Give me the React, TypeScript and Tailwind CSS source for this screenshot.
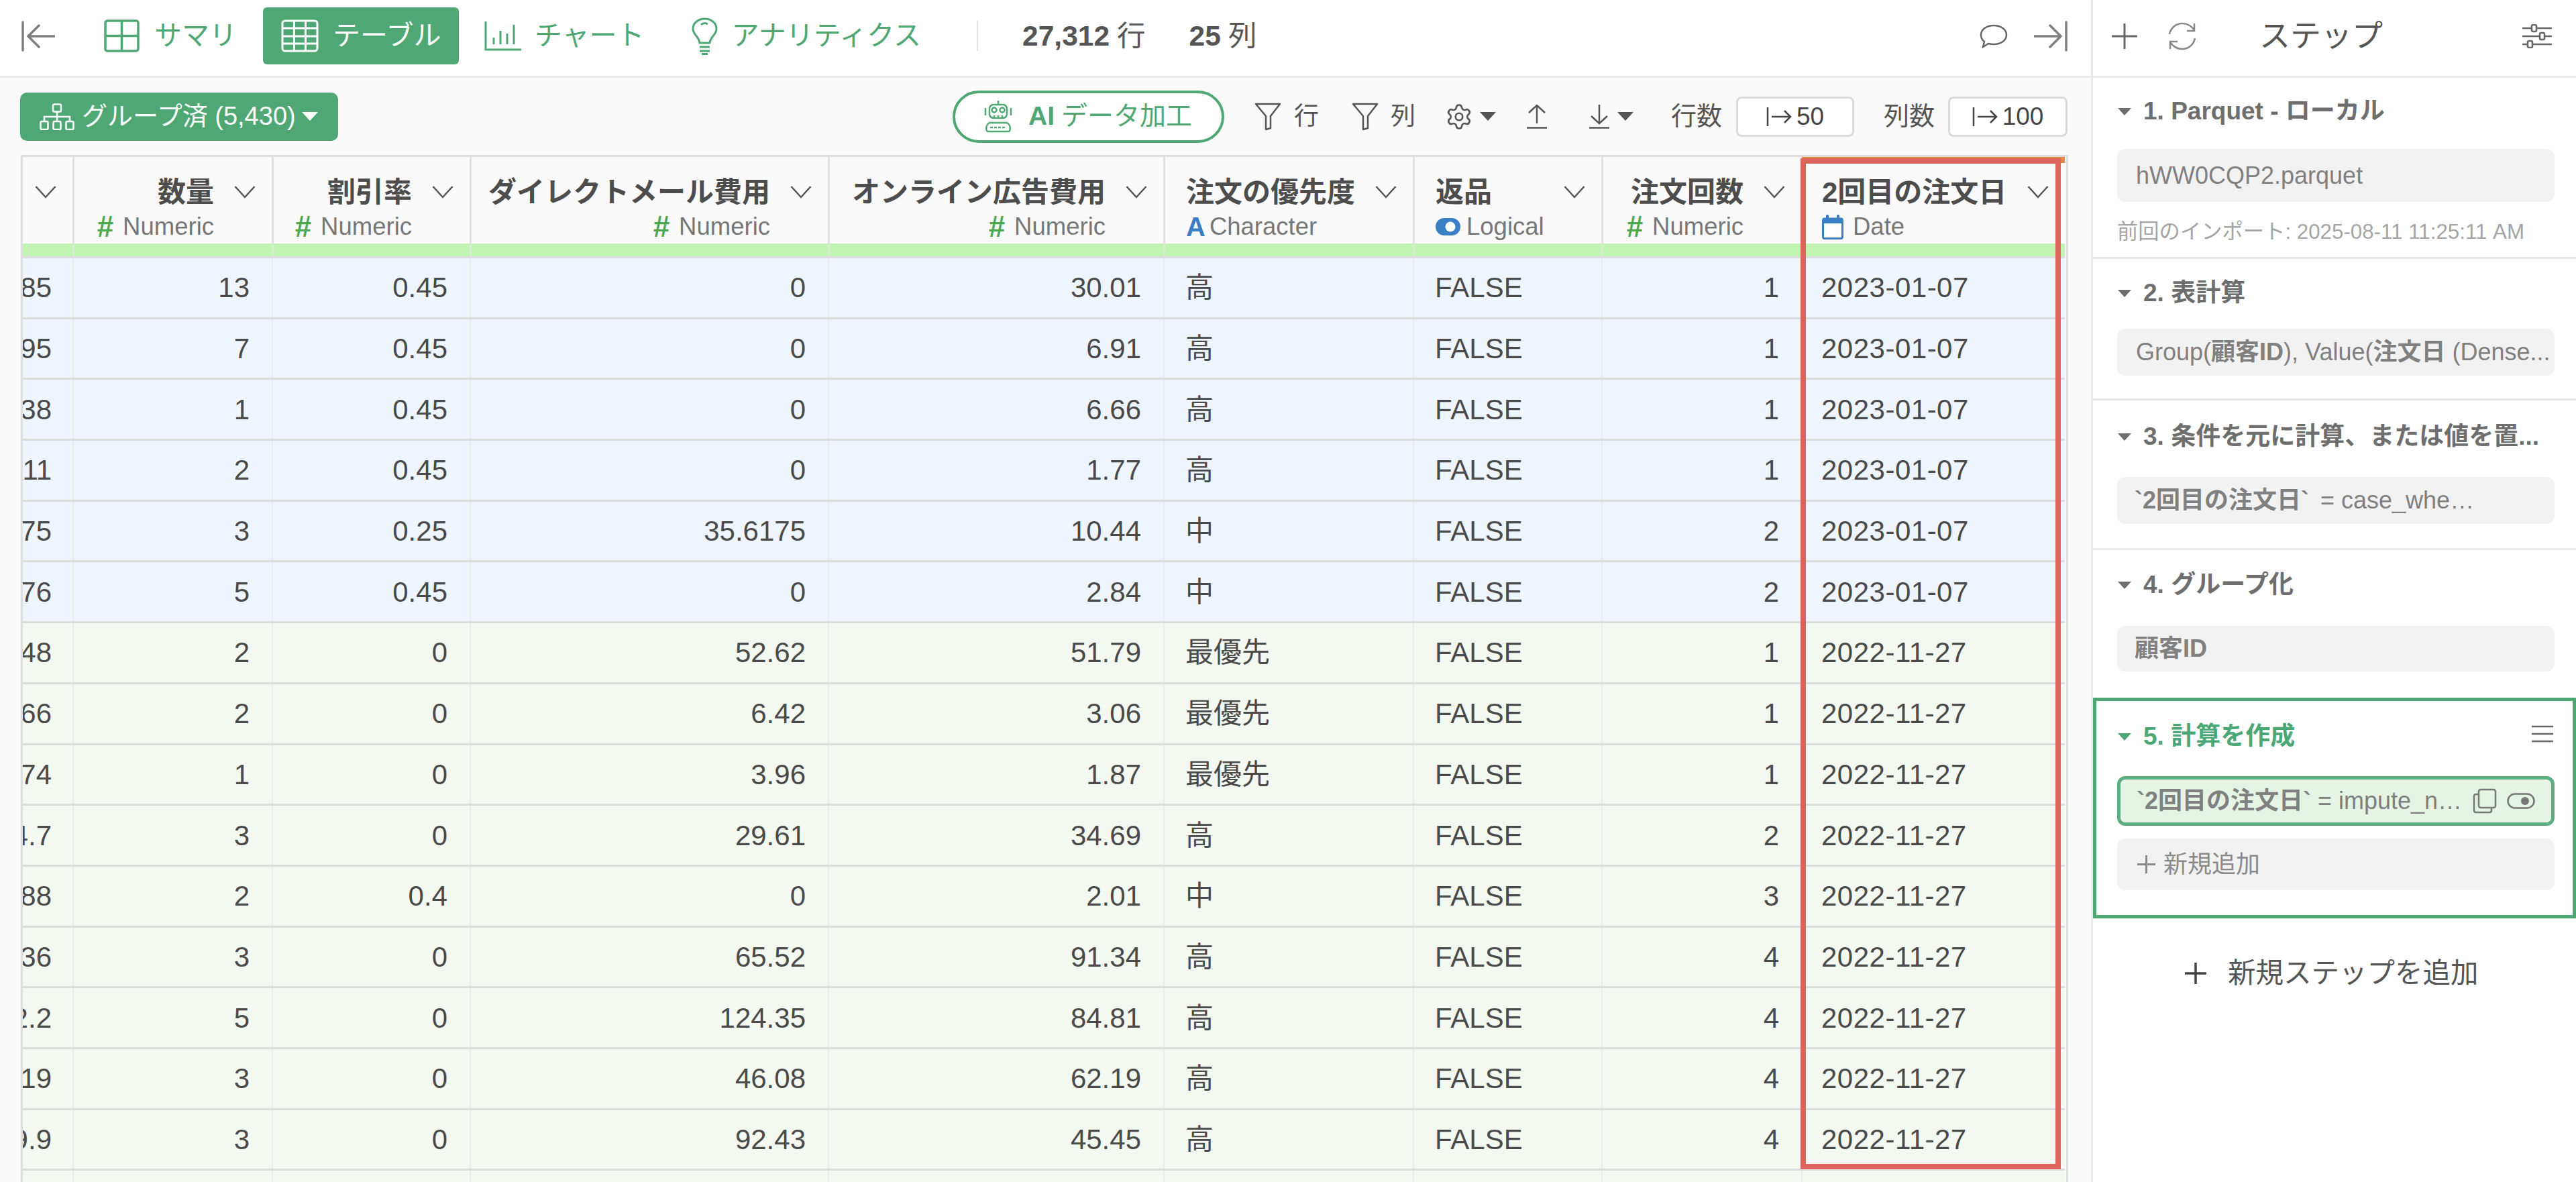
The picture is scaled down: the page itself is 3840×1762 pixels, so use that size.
import { Settings } from "lucide-react";

const GREEN = "#4fa874";

const rows = [
  ["85", "13", "0.45", "0", "30.01", "高", "FALSE", "1", "2023-01-07"],
  ["95", "7", "0.45", "0", "6.91", "高", "FALSE", "1", "2023-01-07"],
  ["38", "1", "0.45", "0", "6.66", "高", "FALSE", "1", "2023-01-07"],
  ["11", "2", "0.45", "0", "1.77", "高", "FALSE", "1", "2023-01-07"],
  ["75", "3", "0.25", "35.6175", "10.44", "中", "FALSE", "2", "2023-01-07"],
  ["76", "5", "0.45", "0", "2.84", "中", "FALSE", "2", "2023-01-07"],
  ["48", "2", "0", "52.62", "51.79", "最優先", "FALSE", "1", "2022-11-27"],
  ["66", "2", "0", "6.42", "3.06", "最優先", "FALSE", "1", "2022-11-27"],
  ["74", "1", "0", "3.96", "1.87", "最優先", "FALSE", "1", "2022-11-27"],
  ["14.7", "3", "0", "29.61", "34.69", "高", "FALSE", "2", "2022-11-27"],
  ["88", "2", "0.4", "0", "2.01", "中", "FALSE", "3", "2022-11-27"],
  ["36", "3", "0", "65.52", "91.34", "高", "FALSE", "4", "2022-11-27"],
  ["22.2", "5", "0", "124.35", "84.81", "高", "FALSE", "4", "2022-11-27"],
  ["19", "3", "0", "46.08", "62.19", "高", "FALSE", "4", "2022-11-27"],
  ["99.9", "3", "0", "92.43", "45.45", "高", "FALSE", "4", "2022-11-27"],
  ["", "", "", "", "", "", "", "", ""],
];

const gridCols = "grid w-[3047px] grid-cols-[77px_297px_295px_534px_500px_372px_281px_298px_393px]";

const columns = [
  { title: "", type: "", right: true },
  { title: "数量", type: "Numeric", right: true },
  { title: "割引率", type: "Numeric", right: true },
  { title: "ダイレクトメール費用", type: "Numeric", right: true },
  { title: "オンライン広告費用", type: "Numeric", right: true },
  { title: "注文の優先度", type: "Character", right: false },
  { title: "返品", type: "Logical", right: false },
  { title: "注文回数", type: "Numeric", right: true },
  { title: "2回目の注文日", type: "Date", right: false },
];

const Chevron = () => (
  <svg width="32" height="20" viewBox="0 0 32 20" fill="none" className="shrink-0">
    <path d="M1.5 2 L16 18 L30.5 2" stroke="#555" strokeWidth="2.5" />
  </svg>
);

const Caret = ({ color = "#555", w = 24, h = 13 }: { color?: string; w?: number; h?: number }) => (
  <svg width={w} height={h} viewBox="0 0 24 13" className="shrink-0">
    <path d="M0 0 H24 L12 13 Z" fill={color} />
  </svg>
);

const TypeIcon = ({ type }: { type: string }) => {
  if (type === "Numeric") return <span className="font-bold text-[#4ea84f] text-[44px] leading-none mr-[14px]">#</span>;
  if (type === "Character") return <span className="font-bold text-[#3a7fc6] text-[40px] leading-none mr-[6px]">A</span>;
  if (type === "Logical")
    return (
      <svg width="37" height="26" viewBox="0 0 37 26" className="mr-[9px] shrink-0">
        <rect x="0" y="0" width="37" height="26" rx="13" fill="#3a7fc6" />
        <circle cx="22" cy="13" r="7.5" fill="#fff" />
      </svg>
    );
  return (
    <svg width="32" height="37" viewBox="0 0 32 37" className="mr-[14px] shrink-0">
      <rect x="1.5" y="6" width="29" height="29.5" rx="2.5" fill="#fff" stroke="#3a7fc6" strokeWidth="3" />
      <rect x="1" y="5" width="30" height="8" fill="#3a7fc6" />
      <rect x="6" y="0" width="4" height="8" rx="1.5" fill="#3a7fc6" />
      <rect x="22" y="0" width="4" height="8" rx="1.5" fill="#3a7fc6" />
    </svg>
  );
};

const FilterIcon = () => (
  <svg width="40" height="42" viewBox="0 0 40 42" fill="none" stroke="#555" strokeWidth="2.5" strokeLinejoin="round" className="shrink-0">
    <path d="M2 2 H38 L24 20 V38 L17 40 V20 Z" />
  </svg>
);

const LimitIcon = () => (
  <svg width="38" height="30" viewBox="0 0 38 30" fill="none" stroke="#444" strokeWidth="2.5" className="shrink-0">
    <path d="M2 1 V29 M8 15 H36 M27 6 L36 15 L27 24" />
  </svg>
);

const SideHead = ({ children, color = "#6e6e6e" }: { children: React.ReactNode; color?: string }) => (
  <div className="flex items-center h-[50px] pl-[37px] gap-[18px] text-[37px] font-bold whitespace-nowrap" style={{ color }}>
    <Caret color={color} w={20} h={11} />
    <span>{children}</span>
  </div>
);

const Tabs = () => (
  <div className="flex items-center h-full">
    <svg width="50" height="46" viewBox="0 0 50 46" fill="none" stroke="#808080" strokeWidth="3.5" strokeLinecap="round" className="ml-[32px]">
      <path d="M2 2 V44 M50 23 H10 M26 7 L10 23 L26 39" />
    </svg>
    <div className="flex items-center gap-[22px] ml-[73px] text-[41px] text-[#4fa874]">
      <svg width="53" height="49" viewBox="0 0 53 49" fill="none" stroke={GREEN} strokeWidth="3.5">
        <rect x="2" y="2" width="49" height="45" rx="3" />
        <path d="M26.5 2 V47 M2 24.5 H51" />
      </svg>
      <span>サマリ</span>
    </div>
    <div className="flex items-center gap-[21px] ml-[39px] w-[292px] h-[85px] pl-[27px] rounded-[6px] bg-[#4fa874] text-[41px] text-white">
      <svg width="56" height="49" viewBox="0 0 56 49" fill="none" stroke="#fff" strokeWidth="3">
        <rect x="2" y="2" width="52" height="45" rx="4" />
        <path d="M2 13 H54 M2 25 H54 M2 36 H54 M19.5 2 V47 M36.5 2 V47" />
      </svg>
      <span>テーブル</span>
    </div>
    <div className="flex items-center gap-[20px] ml-[38px] text-[41px] text-[#4fa874]">
      <svg width="55" height="44" viewBox="0 0 55 44" fill="none" stroke={GREEN} strokeWidth="3">
        <path d="M2 0 V42 H55 M14 34 V24 M24 34 V14 M34 34 V18 M44 34 V5" />
      </svg>
      <span>チャート</span>
    </div>
    <div className="flex items-center gap-[21px] ml-[70px] text-[41px] text-[#4fa874]">
      <svg width="39" height="56" viewBox="0 0 39 56" fill="none" stroke={GREEN} strokeWidth="3">
        <path d="M12 38 C11 28 2 26 2 17 C2 8 10 2 19.5 2 C29 2 37 8 37 17 C37 26 28 28 27 38 Z" />
        <path d="M12 44 H27 M12 50 H27 M15 54.5 H24" />
        <path d="M14 11 C17 8 21 8 24 10" />
      </svg>
      <span>アナリティクス</span>
    </div>
    <div className="w-[2px] h-[45px] bg-[#e2e2e2] ml-[83px]" />
    <div className="flex items-center ml-[66px] text-[42.5px] text-[#555] whitespace-nowrap">
      <span className="font-bold">27,312</span>
      <span className="ml-[11px]">行</span>
      <span className="font-bold ml-[65px]">25</span>
      <span className="ml-[11px]">列</span>
    </div>
    <svg width="42" height="36" viewBox="0 0 42 36" fill="none" stroke="#666" strokeWidth="2.5" className="ml-[1078px]">
      <path d="M21 2 C32 2 40 8 40 16 C40 24 32 30 21 30 C18 30 15 29.5 13 29 L5 34 L7 26 C3.5 23.5 2 20 2 16 C2 8 10 2 21 2 Z" />
    </svg>
    <svg width="50" height="46" viewBox="0 0 50 46" fill="none" stroke="#808080" strokeWidth="3.5" strokeLinecap="round" className="ml-[39px]">
      <path d="M48 2 V44 M0 23 H40 M24 7 L40 23 L24 39" />
    </svg>
  </div>
);

const Toolbar = () => (
  <div className="flex items-center h-[115px] pl-[30px] text-[#555]">
    <div className="flex items-center w-[474px] h-[72px] rounded-[10px] bg-[#4fa874] text-white text-[38px] whitespace-nowrap pl-[29px]">
      <svg width="52" height="40" viewBox="0 0 52 40" fill="none" stroke="#fff" strokeWidth="2.5" className="shrink-0">
        <rect x="20" y="1.5" width="12" height="11" rx="2" />
        <path d="M26 12.5 V20 M7 27 V20 H45 V27 M26 20 V27" />
        <rect x="1.5" y="27" width="11" height="12" rx="2" />
        <rect x="20.5" y="27" width="11" height="12" rx="2" />
        <rect x="39.5" y="27" width="11" height="12" rx="2" />
      </svg>
      <span className="ml-[11px]">グループ済 (5,430)</span>
      <span className="ml-[9px]"><Caret color="#fff" /></span>
    </div>
    <div className="flex items-center ml-[916px] w-[405px] h-[78px] rounded-full border-[4px] border-[#4fa874] bg-white text-[#4fa874] text-[39px] whitespace-nowrap pl-[43px]">
      <svg width="42" height="48" viewBox="0 0 42 48" fill="none" stroke={GREEN} strokeWidth="2.5" className="shrink-0">
        <path d="M21 0 V6" />
        <rect x="8" y="6" width="26" height="20" rx="6" />
        <circle cx="15" cy="14" r="3.5" />
        <circle cx="27" cy="14" r="3.5" />
        <path d="M15 22 V27 M21 22 V27 M27 22 V27 M2 11 V22 M40 11 V22" />
        <path d="M6 46 C2 46 2 36 8 33 H34 C40 36 40 46 36 46 Z" />
        <path d="M9 40 H33" strokeDasharray="4 2" />
      </svg>
      <span className="font-bold ml-[24px]">AI</span>
      <span className="ml-[10px]">データ加工</span>
    </div>
    <div className="ml-[45px]"><FilterIcon /></div>
    <span className="ml-[19px] text-[37px]">行</span>
    <div className="ml-[49px]"><FilterIcon /></div>
    <span className="ml-[18px] text-[37px]">列</span>
    <Settings size={42} strokeWidth={1.5} color="#555" className="ml-[44px]" />
    <span className="ml-[10px]"><Caret /></span>
    <svg width="30" height="36" viewBox="0 0 30 36" fill="none" stroke="#555" strokeWidth="2.5" className="ml-[46px]">
      <path d="M15 1 V28 M3 12 L15 1 L27 12 M0 34.5 H30" />
    </svg>
    <svg width="30" height="36" viewBox="0 0 30 36" fill="none" stroke="#555" strokeWidth="2.5" className="ml-[63px]">
      <path d="M15 0 V28 M3 17 L15 28 L27 17 M0 34.5 H30" />
    </svg>
    <span className="ml-[12px]"><Caret /></span>
    <span className="ml-[56px] text-[38px] whitespace-nowrap">行数</span>
    <div className="flex items-center justify-center gap-[7px] ml-[21px] w-[176px] h-[60px] rounded-[8px] border-[3px] border-[#dadada] bg-white text-[37px] text-[#444]">
      <LimitIcon />
      <span>50</span>
    </div>
    <span className="ml-[44px] text-[38px] whitespace-nowrap">列数</span>
    <div className="flex items-center justify-center gap-[7px] ml-[20px] w-[178px] h-[60px] rounded-[8px] border-[3px] border-[#dadada] bg-white text-[37px] text-[#444]">
      <LimitIcon />
      <span>100</span>
    </div>
  </div>
);

const DataTable = () => (
  <div className="relative ml-[31px] w-[3052px] flex-1 border-t-[3px] border-l-[3px] border-r-[3px] border-[#dedede] overflow-hidden">
    <div className={`${gridCols} -ml-[3px] h-[129px]`}>
      {columns.map((c, i) => (
        <div key={i} className={`flex flex-col pt-[24px] ${i === 0 ? "" : "border-l-[3px] border-[#e0e0e0]"}`}>
          <div className={`flex items-center h-[56px] text-[42px] font-bold text-[#4d4d4d] whitespace-nowrap pr-[24px] ${c.right ? "justify-end gap-[30px]" : `justify-between ${i === 8 ? "pl-[28px]" : "pl-[31px]"}`}`}>
            {c.title && <span>{c.title}</span>}
            <Chevron />
          </div>
          {c.type && (
            <div className={`flex items-center h-[40px] mt-[4px] text-[36.5px] text-[#777] ${c.right ? "justify-end pr-[86px]" : i === 8 ? "pl-[28px]" : "pl-[31px]"}`}>
              <TypeIcon type={c.type} />
              <span>{c.type}</span>
            </div>
          )}
        </div>
      ))}
    </div>
    <div className={`${gridCols} -ml-[3px] h-[19px] bg-[#c2f4b3]`}>
      {columns.map((_, i) => (
        <div key={i} className={i === 0 ? "" : "border-l-[3px] border-[#d8ecd0]"} />
      ))}
    </div>
    {rows.map((r, n) => (
      <div key={n} className={`${gridCols} -ml-[3px] h-[90.7px] border-t-[3px] border-[#dcdcdc] text-[42px] text-[#4a4a4a] ${n < 6 ? "bg-[#eff5fd]" : "bg-[#f3f8f0]"}`}>
        {r.map((v, i) => (
          <div
            key={i}
            className={`flex items-center overflow-hidden whitespace-nowrap ${i === 0 ? "justify-end pr-[31px]" : "border-l-[2px] border-[#ebebeb]"} ${i > 0 && columns[i].right ? "justify-end pr-[33px]" : ""} ${i === 8 ? "pl-[28px] tracking-[0.5px]" : i > 0 && !columns[i].right ? "pl-[31px]" : ""}`}
          >
            <span className="shrink-0">{v}</span>
          </div>
        ))}
      </div>
    ))}
    <div className="absolute left-[2652px] top-0 w-[392px] h-[9px] bg-[#e08a4a]" />
    <div className="absolute left-[2650px] top-[2px] w-[388px] h-[1507px] border-[8px] border-[#dc645c]" />
  </div>
);

const Sidebar = () => (
  <div className="flex-1 flex flex-col bg-white border-l-[3px] border-[#e8e8e8] text-[#808080]">
    <div className="flex items-center h-[116px] border-b-[3px] border-[#e8e8e8] pb-[6px]">
      <svg width="38" height="38" viewBox="0 0 38 38" stroke="#666" strokeWidth="3" className="ml-[28px]">
        <path d="M19 0 V38 M0 19 H38" />
      </svg>
      <svg width="44" height="42" viewBox="0 0 44 42" fill="none" stroke="#888" strokeWidth="2.5" className="ml-[45px]">
        <path d="M3 18 C5 8 13 2 22 2 C30 2 36 6 40 12 M40 2 V13 H29 M41 24 C39 34 31 40 22 40 C14 40 8 36 4 30 M4 40 V29 H15" />
      </svg>
      <span className="ml-[93px] text-[46px] text-[#555] whitespace-nowrap">ステップ</span>
      <svg width="44" height="36" viewBox="0 0 44 36" fill="none" stroke="#666" strokeWidth="2.5" className="ml-[208px]">
        <path d="M0 6 H44 M0 18 H44 M0 30 H44" />
        <rect x="14" y="1" width="7" height="10" rx="2" fill="#fff" />
        <rect x="26" y="13" width="7" height="10" rx="2" fill="#fff" />
        <rect x="8" y="25" width="7" height="10" rx="2" fill="#fff" />
      </svg>
    </div>

    <div className="h-[270px] border-b-[3px] border-[#e8e8e8] pt-[25px]">
      <SideHead>1. Parquet - ローカル</SideHead>
      <div className="flex items-center mt-[31px] ml-[36px] w-[652px] h-[79px] rounded-[12px] bg-[#f2f2f2] pl-[28px] text-[36px]">hWW0CQP2.parquet</div>
      <div className="mt-[27px] ml-[36px] text-[31.3px] leading-[36px] text-[#a5a5a5] whitespace-nowrap">前回のインポート: 2025-08-11 11:25:11 AM</div>
    </div>

    <div className="h-[211px] border-b-[3px] border-[#e8e8e8] pt-[26px]">
      <SideHead>2. 表計算</SideHead>
      <div className="flex items-center mt-[28px] ml-[36px] w-[652px] h-[70px] rounded-[12px] bg-[#f2f2f2] pl-[28px] text-[36px] whitespace-nowrap">
        Group(<b>顧客ID</b>), Value(<b>注文日</b>&nbsp;(Dense...
      </div>
    </div>

    <div className="h-[223px] border-b-[3px] border-[#e8e8e8] pt-[29px]">
      <SideHead>3. 条件を元に計算、または値を置...</SideHead>
      <div className="flex items-center mt-[35px] ml-[36px] w-[652px] h-[70px] rounded-[12px] bg-[#f2f2f2] pl-[26px] text-[36px] whitespace-nowrap">
        <b>`2回目の注文日`</b>
        <span className="ml-[17px]">= case_whe…</span>
      </div>
    </div>

    <div className="h-[220px] pt-[27px]">
      <SideHead>4. グループ化</SideHead>
      <div className="flex items-center mt-[36px] ml-[36px] w-[652px] h-[68px] rounded-[12px] bg-[#f2f2f2] pl-[26px] text-[36px] font-bold">顧客ID</div>
    </div>

    <div className="h-[329px] border-[5px] border-[#4fa874] pt-[28px]">
      <div className="flex items-center pr-[29px] -ml-[5px]">
        <div className="flex-1"><SideHead color="#4ba876">5. 計算を作成</SideHead></div>
        <svg width="32" height="26" viewBox="0 0 32 26" stroke="#666" strokeWidth="2.5" className="-mt-[8px]">
          <path d="M0 2 H32 M0 13 H32 M0 24 H32" />
        </svg>
      </div>
      <div className="flex items-center mt-[34px] ml-[31px] w-[652px] h-[74px] rounded-[12px] border-[5px] border-[#5aae80] bg-[#e6f4e6] pl-[24px] text-[36px] whitespace-nowrap">
        <b>`2回目の注文日`</b>
        <span>&nbsp;= impute_n…</span>
        <svg width="36" height="38" viewBox="0 0 36 38" fill="none" stroke="#777" strokeWidth="2.5" className="ml-[16px] shrink-0">
          <rect x="9" y="2" width="25" height="27" rx="3" />
          <path d="M9 9 H5 C3 9 2 10 2 12 V33 C2 35 3 36 5 36 H25 C27 36 28 35 28 33 V29" />
        </svg>
        <svg width="42" height="24" viewBox="0 0 42 24" fill="none" stroke="#777" strokeWidth="2.5" className="ml-[15px] shrink-0">
          <rect x="1.5" y="1.5" width="39" height="21" rx="10.5" />
          <circle cx="27" cy="12" r="6" fill="#777" stroke="none" />
        </svg>
      </div>
      <div className="flex items-center gap-[12px] mt-[19px] ml-[31px] w-[652px] h-[77px] rounded-[12px] bg-[#f2f2f2] pl-[30px] text-[36px] text-[#8a8a8a]">
        <svg width="27" height="27" viewBox="0 0 27 27" stroke="#8a8a8a" strokeWidth="3">
          <path d="M13.5 0 V27 M0 13.5 H27" />
        </svg>
        <span>新規追加</span>
      </div>
    </div>

    <div className="flex items-center h-[164px] pl-[137px] gap-[32px] text-[41.5px] text-[#555] whitespace-nowrap">
      <svg width="32" height="32" viewBox="0 0 32 32" stroke="#444" strokeWidth="3.5">
        <path d="M16 0 V32 M0 16 H32" />
      </svg>
      <span>新規ステップを追加</span>
    </div>
  </div>
);

export default function App() {
  return (
    <div className="flex w-[3840px] h-[1762px] overflow-hidden bg-[#fafafa] [font-family:'Liberation_Sans','Noto_Sans_CJK_JP',sans-serif]">
      <div className="flex flex-col w-[3117px] shrink-0">
        <div className="h-[116px] bg-white border-b-[3px] border-[#e8e8e8] pb-[6px] shrink-0">
          <Tabs />
        </div>
        <Toolbar />
        <DataTable />
      </div>
      <Sidebar />
    </div>
  );
}
